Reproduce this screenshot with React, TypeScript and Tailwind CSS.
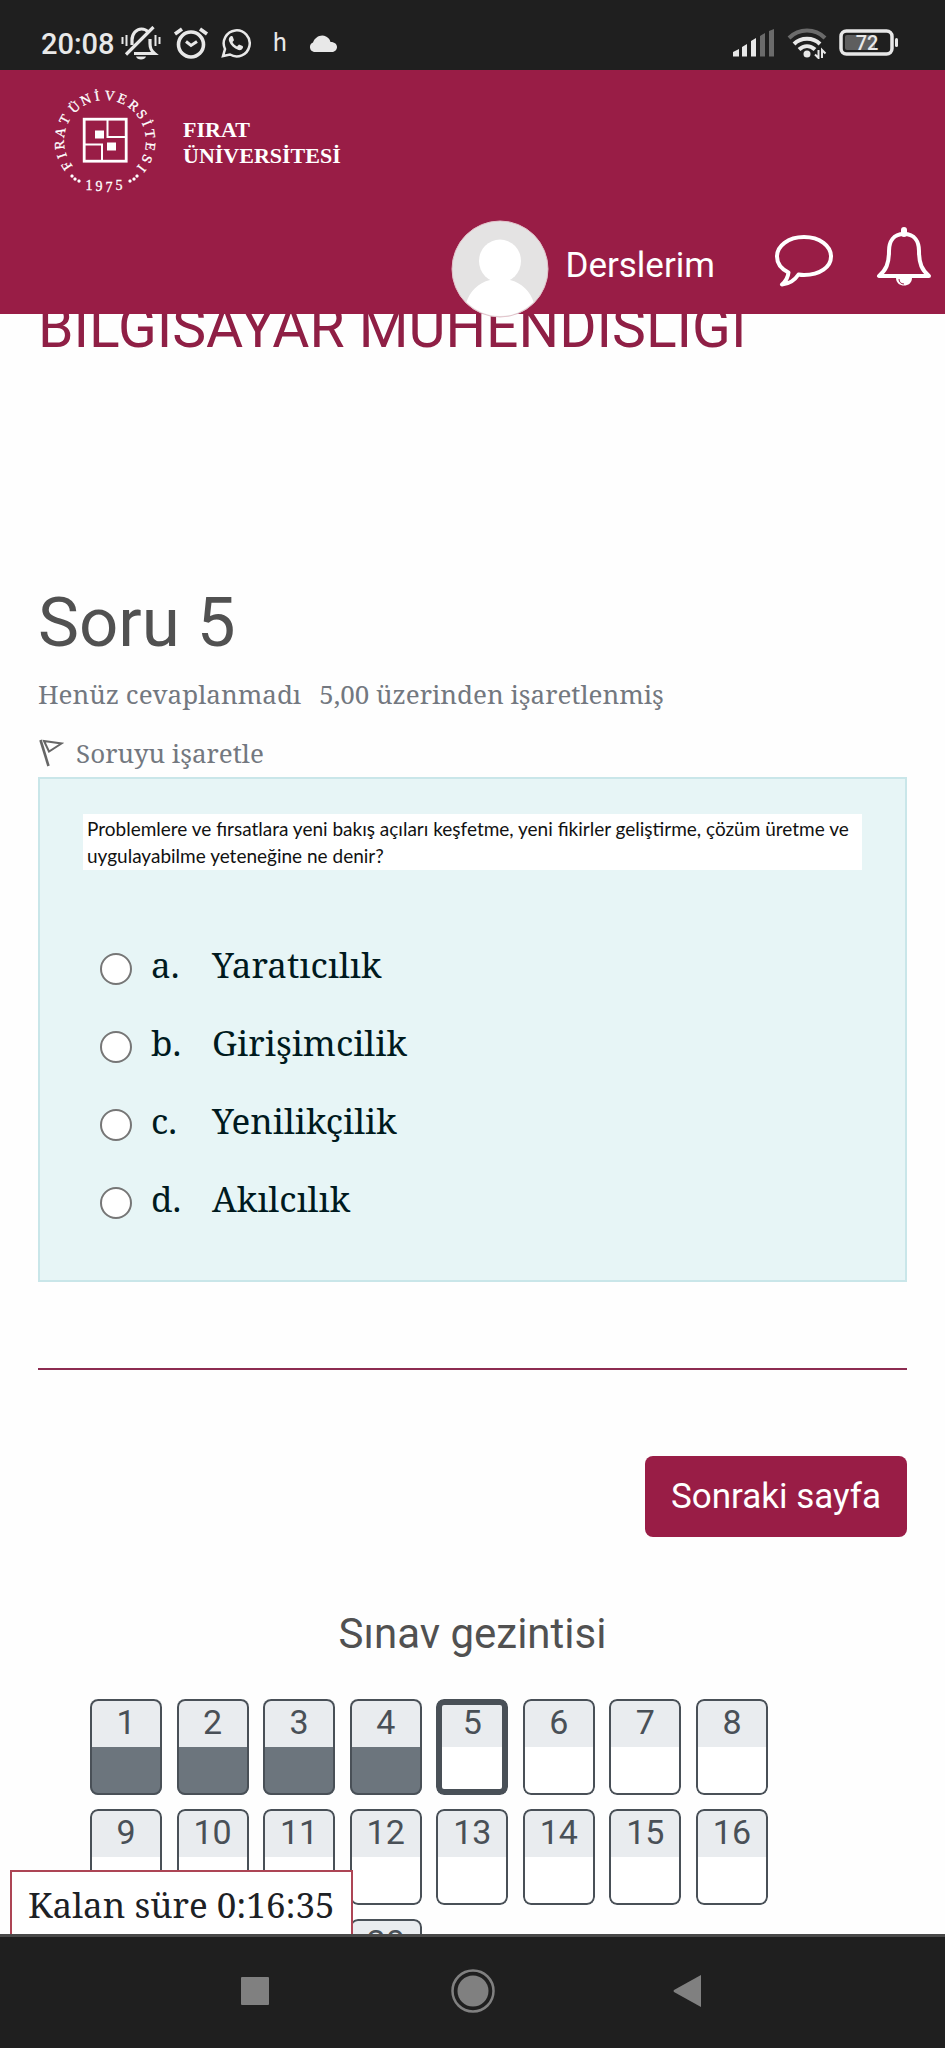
import React from 'react';

const SERIF = "font-['Noto_Serif','Droid_Serif','DejaVu_Serif',serif]";

const options = [
  { key: 'a', text: 'Yaratıcılık' },
  { key: 'b', text: 'Girişimcilik' },
  { key: 'c', text: 'Yenilikçilik' },
  { key: 'd', text: 'Akılcılık' },
];

const ringLetters: [string, number][] = [
  ['F', -123], ['I', -109], ['R', -95], ['A', -79], ['T', -62],
  ['Ü', -42], ['N', -25], ['İ', -10], ['V', 6], ['E', 22], ['R', 39],
  ['S', 54], ['İ', 67], ['T', 81], ['E', 97], ['S', 113], ['I', 127],
];

const ringDots: [number, number][] = [
  [20, 88], [23, 91], [27, 93], [78, 93], [82, 91], [85, 88],
];

function UniversityLogo() {
  return (
    <svg viewBox="0 0 106 106" className="size-[106px] shrink-0" role="img" aria-label="Fırat Üniversitesi">
      <g fill="#fff" stroke="#fff" strokeWidth="0.3" fontFamily="'Liberation Serif', serif" fontSize="14" textAnchor="middle">
        {ringLetters.map(([letter, angle]) => (
          <text key={angle} x="53" y="12" transform={`rotate(${angle} 53 53)`}>{letter}</text>
        ))}
        <text x="37" y="102">1</text>
        <text x="47" y="103">9</text>
        <text x="57" y="104">7</text>
        <text x="67" y="102">5</text>
        {ringDots.map(([x, y]) => <circle key={`${x}-${y}`} cx={x} cy={y} r="1.5" />)}
      </g>
      <g fill="none" stroke="#fff">
        <rect x="32.200" y="31.200" width="42" height="42" strokeWidth="2.800" />
        <path d="M55.500 32v17H74M32 56.500h18V73" strokeWidth="2" />
      </g>
      <path d="M43 42.500h9v8h-9zM55 54.500h9v8h-9z" fill="#fff" />
    </svg>
  );
}

function StatusBar() {
  return (
    <div className="flex h-[70px] shrink-0 items-start justify-between bg-[#1f1f1f] pl-[41px] pr-[46px] pt-[27px] text-[#e8e8e8]">
      <div className="flex h-8 items-center">
        <span className="w-20 pt-px text-[29px] leading-8 font-medium">20:08</span>
        <svg viewBox="0 0 40 34" className="h-[34px] w-10" fill="none" stroke="currentColor" strokeWidth="3.200">
          <path d="M11 19v-5c0-6 4-11 9.500-11 3 0 5 1 6.500 3" />
          <path d="M13 27.500h20.500c-3.500-3-4.500-5-4.500-10V13" />
          <path d="M32.500 1L5 28.500" />
          <path d="M15 30.500h10c-1 4-9 4-10 0z" fill="currentColor" stroke="none" />
          <path d="M1.500 11v7M5.500 9v11M34.500 9v11M38.500 11v7" strokeWidth="2" />
        </svg>
        <svg viewBox="0 0 36 32" className="ml-3 h-8 w-9" fill="none" stroke="currentColor" strokeWidth="3.600">
          <circle cx="18" cy="17.500" r="12.500" />
          <path d="M2 7l7-5M34 7l-7-5" />
          <path d="M13 14.500l5 4 6-4" strokeWidth="3" />
        </svg>
        <svg viewBox="0 0 30 30" className="ml-3 size-[30px]" fill="none" stroke="currentColor" strokeWidth="2.500">
          <path d="M2 28l2-7A13 13 0 1 1 9 26.500z" />
          <path d="M10 8c-2 1-2.500 3-2 5 1.500 4 5 7.500 9.500 9 2 .5 4-.5 4.500-2.500.2-1-.2-1.500-1-1.800l-3-1.200-2 2c-2-1-4-3-4.500-4.500l1.500-1.800-1.200-3.500C11.500 8 11 7.700 10 8z" fill="currentColor" stroke="none" />
        </svg>
        <span className="ml-5 w-[38px] pl-[2px] text-[25px] leading-8">h</span>
        <svg viewBox="0 0 28 17" className="h-[17px] w-7" fill="currentColor">
          <path d="M5 17a5 5 0 0 1-1-9.500C6 2 12-1 17 1.500c3 1.500 4 3.500 4.500 5.500C26 7 28 9.500 28 12s-2 5-5 5z" />
        </svg>
      </div>
      <div className="flex h-8 items-center gap-3">
        <svg viewBox="0 0 43 28" className="h-7 w-[43px]" fill="currentColor">
          <path d="M1 23l6-3v7.500H1zM10 18l5-3v12.500h-5zM19 12l5-3v18.500h-5z" />
          <path d="M28 7l5-3v23.500h-5zM37 2l5-2v27.500h-5z" fill="#6b6b6b" />
        </svg>
        <svg viewBox="0 0 40 32" className="h-8 w-10" fill="none" stroke="currentColor" strokeWidth="4">
          <path d="M2 11C12 1 28 1 38 11" stroke="#6b6b6b" />
          <path d="M7 17C14 10 26 10 33 17" />
          <path d="M12 22.500c5-4.500 11-4.500 16 0" />
          <circle cx="20" cy="27" r="3.500" fill="currentColor" stroke="none" />
          <path d="M31.500 23v8l-3.500-3.500M35 31v-8l3.500 3.500" strokeWidth="2" />
        </svg>
        <svg viewBox="0 0 60 28" className="h-7 w-[60px]">
          <rect x="2" y="2" width="51" height="23" rx="5.500" fill="none" stroke="currentColor" strokeWidth="3.500" />
          <rect x="6" y="6" width="30" height="15" rx="2" fill="#5e5e5e" />
          <rect x="56" y="9" width="3" height="9" rx="1.500" fill="currentColor" />
          <text x="28" y="20.500" textAnchor="middle" fill="currentColor" fontFamily="Roboto, sans-serif" fontSize="20" fontWeight="500">72</text>
        </svg>
      </div>
    </div>
  );
}

function Header() {
  return (
    <header className="relative z-10 flex h-[244px] shrink-0 flex-col justify-between bg-[#991d46] text-white">
      <a href="#" className="flex items-center pl-[52px] pt-[18px]">
        <UniversityLogo />
        <span className="ml-[25px] pt-1 font-['Liberation_Serif',serif] text-[22px] leading-[26px] font-bold">
          FIRAT<br />ÜNİVERSİTESİ
        </span>
      </a>
      <div className="flex h-24 items-center justify-end pr-[13px]">
        <svg viewBox="0 0 98 98" className="-mb-[6px] size-[98px]" role="img" aria-label="Profil">
          <defs><clipPath id="avatar"><circle cx="49" cy="49" r="47" /></clipPath></defs>
          <circle cx="49" cy="49" r="48" fill="#e4e3e3" stroke="#e3c3cb" />
          <g clipPath="url(#avatar)" fill="#fff">
            <ellipse cx="49" cy="41" rx="21" ry="21.500" />
            <path d="M39 54h20v6c12 3 20 11 24 23v15H15V83c4-12 12-20 24-23z" />
          </g>
        </svg>
        <a href="#" className="ml-4 text-[35px] leading-[40px]">Derslerim</a>
        <button type="button" aria-label="Mesajlar" className="ml-[59px] -mt-[10px]">
          <svg viewBox="0 0 60 54" className="h-[54px] w-[60px]" fill="none" stroke="currentColor" strokeWidth="4" strokeLinejoin="round">
            <path d="M30 3C14 3 3 12 3 22.500c0 7 4.500 12.500 11.500 16C14 43 12 47 8 50.500c7-.5 12.500-4 16.500-10 1.500.3 3.500.5 5.500.5 16 0 27-8 27-18.500S46 3 30 3z" />
          </svg>
        </button>
        <button type="button" aria-label="Bildirimler" className="ml-[42px] -mt-[18px]">
          <svg viewBox="0 0 56 60" className="h-[60px] w-14" fill="none" stroke="currentColor" strokeWidth="4" strokeLinejoin="round">
            <path d="M28 7C17 7 13 15 13 24c0 13-3 19-10 25h50c-7-6-10-12-10-25 0-9-4-17-15-17z" />
            <path d="M28 7V3" strokeWidth="6" strokeLinecap="round" />
            <path d="M20 51c0 10 16 10 16 0z" fill="currentColor" stroke="none" />
            <path d="M23 52c0 3 2 5 5 5" stroke="#991d46" strokeWidth="1" />
          </svg>
        </button>
      </div>
    </header>
  );
}

function NavCell({ n }: { n: number }) {
  const current = n === 5;
  return (
    <a
      href="#"
      className={`relative flex h-24 flex-col overflow-hidden rounded-lg text-[34px] leading-[46px] text-[#495057] ${n < 5 ? 'bg-[#6c757d]' : 'bg-white'}`}
    >
      <span className="h-12 bg-[#e9ecef] text-center">{n}</span>
      <span className={`absolute inset-0 rounded-lg border-[#495057] ${current ? 'border-[6px]' : 'border-2'}`} />
    </a>
  );
}

export default function App() {
  return (
    <div className="flex h-screen flex-col overflow-hidden bg-[#fefefe] font-['Roboto',sans-serif]">
      <StatusBar />
      <Header />
      <main className="relative min-h-0 flex-1 overflow-hidden px-[38px]">
        <h1 className="-mt-4 text-[57px] leading-[60px] whitespace-nowrap text-[#8f1f45]">BİLGİSAYAR MÜHENDİSLİĞİ</h1>
        <section className="pt-[223px]">
          <h2 className="text-[69px] leading-[84px] text-[#515151]">Soru 5</h2>
          <p className={`mt-[10px] flex gap-[18px] text-[26px] leading-[38px] whitespace-nowrap text-[#737880] ${SERIF}`}>
            <span>Henüz cevaplanmadı</span>
            <span>5,00 üzerinden işaretlenmiş</span>
          </p>
          <a href="#" className={`mt-5 flex items-center text-[26px] leading-[40px] text-[#737880] ${SERIF}`}>
            <svg viewBox="0 0 26 28" className="mr-3 h-7 w-[26px]" fill="none" stroke="#666" strokeWidth="2">
              <path d="M2.500 1l8 26" strokeWidth="2.600" />
              <path d="M6 2l17.500 2.500L11 12.500z" />
            </svg>
            Soruyu işaretle
          </a>
          <form className="mt-1 border-2 border-[#c9e6e9] bg-[#e7f5f6] px-[43px] pt-[35px] pb-[42px]">
            <p className="bg-white px-1 py-px font-['Lato',sans-serif] text-[19px] leading-[27px] text-[#111]">
              Problemlere ve fırsatlara yeni bakış açıları keşfetme, yeni fikirler geliştirme, çözüm üretme ve uygulayabilme yeteneğine ne denir?
            </p>
            <div className={`mt-14 pl-[17px] text-[35px] leading-[78px] text-[#001a1e] ${SERIF}`}>
              {options.map((o) => (
                <label key={o.key} className="flex h-[78px] items-center">
                  <input type="radio" name="answer" value={o.key} className="mt-2 size-8 appearance-none rounded-full border-2 border-[#767676] bg-white checked:border-[9px]" />
                  <span className="ml-[19px] w-[61px]">{o.key}.</span>
                  <span>{o.text}</span>
                </label>
              ))}
            </div>
          </form>
        </section>
        <hr className="mt-[86px] border-t-2 border-[#8c2b50]" />
        <div className="mt-[86px] flex justify-end">
          <button type="button" className="h-[81px] rounded-lg bg-[#991d46] px-[26px] text-[35px] leading-10 text-white">Sonraki sayfa</button>
        </div>
        <nav aria-label="Sınav gezintisi">
          <h3 className="mt-[73px] text-center text-[42px] leading-[48px] text-[#515151]">Sınav gezintisi</h3>
          <div className="mt-[41px] ml-[52px] grid max-w-[678px] grid-cols-[repeat(8,72px)] justify-between gap-y-[14px]">
            {Array.from({ length: 20 }, (_, i) => <NavCell key={i} n={i + 1} />)}
          </div>
        </nav>
        <div className={`absolute bottom-0 left-[10px] h-16 border-2 border-b-0 border-[#ad4555] bg-white px-4 pt-[7px] text-[35px] leading-[52px] whitespace-nowrap text-[#1d2125] ${SERIF}`}>
          Kalan süre 0:16:35
        </div>
      </main>
      <div className="grid h-[114px] shrink-0 grid-cols-[255px_1fr_255px] border-t-[3px] border-[#494949] bg-[#1f1f1f] pb-[3px] text-[#808080]">
        <button type="button" aria-label="Son uygulamalar" className="flex items-center justify-end">
          <svg viewBox="0 0 28 28" className="-mr-[14px] size-7" fill="currentColor"><rect width="28" height="28" rx="1" /></svg>
        </button>
        <button type="button" aria-label="Ana ekran" className="flex items-center justify-center">
          <svg viewBox="0 0 44 44" className="size-11" fill="currentColor">
            <circle cx="22" cy="22" r="20.500" fill="none" stroke="currentColor" strokeWidth="2.500" />
            <circle cx="22" cy="22" r="15.500" />
          </svg>
        </button>
        <button type="button" aria-label="Geri" className="flex items-center justify-start">
          <svg viewBox="0 0 28 32" className="-ml-[17px] h-8 w-7" fill="currentColor"><path d="M28 0v32L1 17q-1-1 0-2z" /></svg>
        </button>
      </div>
    </div>
  );
}
